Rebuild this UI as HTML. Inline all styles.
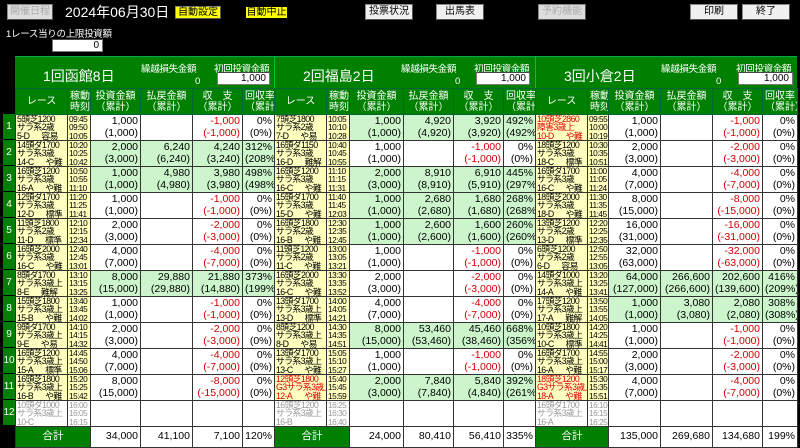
<!DOCTYPE html>
<html><head><meta charset="utf-8"><style>
*{margin:0;padding:0;box-sizing:border-box}
body{width:800px;height:445px;background:#000;position:relative;overflow:hidden;font-family:"Liberation Sans","Noto Sans CJK JP",sans-serif;color:#000}
.btn{position:absolute;top:4px;height:16px;font-size:10px;line-height:14px;text-align:center;background:#f0f0f0;border:1px solid #888;border-right-color:#555;border-bottom-color:#555}
.dis{color:#aaa;background:#ddd}
.yel{background:#ffff00;color:#000}
.tt{position:absolute;color:#fff}
.inp{position:absolute;background:#fff;border:1px solid #777;border-top-color:#444;font-size:10px;text-align:right;padding-right:3px;line-height:12px}
.head{position:absolute;top:56px;height:32px;background:#008000;border-top:1px solid #0a5;color:#fff}
.head .ttl{position:absolute;left:28px;top:9px;font-size:14px}
.head .l1{position:absolute;top:4px;font-size:9.5px;letter-spacing:-0.3px}
table{position:absolute;top:88px;border-collapse:collapse;table-layout:fixed}
td{border:1px solid #333;overflow:hidden;white-space:nowrap;font-size:10.5px;line-height:11.5px;text-align:right;padding:0 2px;background:#fff;height:26px}
tr.h td{background:#008000;color:#fff;text-align:center;font-size:10px;line-height:11px;height:26px;border-color:#063}
td.r{background:#ffffc0;text-align:left;font-size:8.8px;letter-spacing:-0.6px;line-height:8.2px;padding:0 1px;vertical-align:middle}
td.t{background:#ffffc0;text-align:left;font-size:8.3px;letter-spacing:-0.5px;line-height:8.2px;padding:0 0 0 1px}
tr.g td{background:#ccf5cc}
tr.g td.r,tr.g td.t{background:#ffffc0}
tr.x td.r,tr.x td.t{background:#fff;color:#999}
td.m{color:#d00000}
td.rr{color:#e00000}
tr.tot td{height:21px;font-size:10.5px}
td.gh{background:#008000!important;color:#fff;text-align:center;font-size:11px}
.rn{position:absolute;left:3px;width:12px;height:26px;background:#008000;color:#fff;font-size:10px;text-align:center;line-height:26px;border-bottom:1px solid #000}
.sp{display:inline-block;width:12px}
</style></head><body>
<div class="btn dis" style="left:7px;width:46px;top:4px">開催日程</div>
<div class="tt" style="left:65px;top:3px;font-size:14px;line-height:18px">2024年06月30日</div>
<div class="btn yel" style="left:175px;width:46px;top:6px;height:13px;line-height:12px">自動設定</div>
<div class="btn yel" style="left:245px;width:43px;top:6px;height:13px;line-height:11px;border:1px solid #000">自動中止</div>
<div class="btn" style="left:365px;width:48px">投票状況</div>
<div class="btn" style="left:436px;width:48px">出馬表</div>
<div class="btn dis" style="left:538px;width:48px">予約機能</div>
<div class="btn" style="left:690px;width:48px">印刷</div>
<div class="btn" style="left:742px;width:48px">終了</div>
<div class="tt" style="left:6px;top:26px;font-size:9.5px;letter-spacing:-0.3px">1レース当りの上限投資額</div>
<div class="inp" style="left:52px;top:39px;width:51px;height:13px">0</div>

<div class="head" style="left:15px;width:259px"><div class="ttl">1回函館8日</div><div class="l1" style="left:126px">繰越損失金額</div><div class="l1" style="left:180px;top:19px">0</div><div class="l1" style="left:199px">初回投資金額</div></div>
<div class="inp" style="left:217px;top:72px;width:53px;height:13px">1,000</div>
<div class="head" style="left:274px;width:261px;border-left:1px solid #0b4"><div class="ttl">2回福島2日</div><div class="l1" style="left:126px">繰越損失金額</div><div class="l1" style="left:180px;top:19px">0</div><div class="l1" style="left:199px">初回投資金額</div></div>
<div class="inp" style="left:476px;top:72px;width:54px;height:13px">1,000</div>
<div class="head" style="left:535px;width:262px;border-left:1px solid #0b4"><div class="ttl">3回小倉2日</div><div class="l1" style="left:125px">繰越損失金額</div><div class="l1" style="left:180px;top:19px">0</div><div class="l1" style="left:200px">初回投資金額</div></div>
<div class="inp" style="left:738px;top:72px;width:55px;height:13px">1,000</div>

<div class="rn" style="top:114px">1</div><div class="rn" style="top:140px">2</div><div class="rn" style="top:166px">3</div><div class="rn" style="top:192px">4</div><div class="rn" style="top:218px">5</div><div class="rn" style="top:244px">6</div><div class="rn" style="top:270px">7</div><div class="rn" style="top:296px">8</div><div class="rn" style="top:322px">9</div><div class="rn" style="top:348px">10</div><div class="rn" style="top:374px">11</div><div class="rn" style="top:400px">12</div>

<table style="left:15px;width:259px">
<colgroup><col style="width:52px"><col style="width:23px"><col style="width:50px"><col style="width:52px"><col style="width:50px"><col style="width:32px"></colgroup>
<tr class="h"><td>レース</td><td>稼動<br>時刻</td><td>投資金額<br>（累計）</td><td>払戻金額<br>（累計）</td><td>収　支<br>（累計）</td><td>回収率<br>（累計）</td></tr>
<tr><td class="r">5頭芝1200<br>サラ系2歳<br>5-D<span class="sp"></span>容易</td><td class="t">09:45<br>09:50<br>10:05</td><td>1,000<br>(1,000)</td><td></td><td class="m">-1,000<br>(-1,000)</td><td>0%<br>(0%)</td></tr>
<tr class="g"><td class="r">14頭ダ1700<br>サラ系3歳<br>14-C<span class="sp"></span>や難</td><td class="t">10:20<br>10:25<br>10:42</td><td>2,000<br>(3,000)</td><td>6,240<br>(6,240)</td><td>4,240<br>(3,240)</td><td>312%<br>(208%)</td></tr>
<tr class="g"><td class="r">16頭芝1200<br>サラ系3歳<br>16-A<span class="sp"></span>や難</td><td class="t">10:50<br>10:55<br>11:10</td><td>1,000<br>(1,000)</td><td>4,980<br>(4,980)</td><td>3,980<br>(3,980)</td><td>498%<br>(498%)</td></tr>
<tr><td class="r">12頭ダ1700<br>サラ系3歳<br>12-D<span class="sp"></span>標準</td><td class="t">11:20<br>11:25<br>11:41</td><td>1,000<br>(1,000)</td><td></td><td class="m">-1,000<br>(-1,000)</td><td>0%<br>(0%)</td></tr>
<tr><td class="r">11頭芝1800<br>サラ系2歳<br>11-D<span class="sp"></span>標準</td><td class="t">12:10<br>12:15<br>12:34</td><td>2,000<br>(3,000)</td><td></td><td class="m">-2,000<br>(-3,000)</td><td>0%<br>(0%)</td></tr>
<tr><td class="r">16頭芝2000<br>サラ系3歳<br>16-C<span class="sp"></span>や難</td><td class="t">12:40<br>12:45<br>13:01</td><td>4,000<br>(7,000)</td><td></td><td class="m">-4,000<br>(-7,000)</td><td>0%<br>(0%)</td></tr>
<tr class="g"><td class="r">8頭ダ1700<br>サラ系3歳上<br>8-E<span class="sp"></span>難解</td><td class="t">13:10<br>13:15<br>13:25</td><td>8,000<br>(15,000)</td><td>29,880<br>(29,880)</td><td>21,880<br>(14,880)</td><td>373%<br>(199%)</td></tr>
<tr><td class="r">15頭芝1800<br>サラ系3歳上<br>15-B<span class="sp"></span>や難</td><td class="t">13:40<br>13:45<br>14:02</td><td>1,000<br>(1,000)</td><td></td><td class="m">-1,000<br>(-1,000)</td><td>0%<br>(0%)</td></tr>
<tr><td class="r">9頭ダ1700<br>サラ系3歳上<br>9-E<span class="sp"></span>や易</td><td class="t">14:10<br>14:15<br>14:32</td><td>2,000<br>(3,000)</td><td></td><td class="m">-2,000<br>(-3,000)</td><td>0%<br>(0%)</td></tr>
<tr><td class="r">16頭芝1200<br>サラ系3歳上<br>15-A<span class="sp"></span>標準</td><td class="t">14:45<br>14:50<br>15:06</td><td>4,000<br>(7,000)</td><td></td><td class="m">-4,000<br>(-7,000)</td><td>0%<br>(0%)</td></tr>
<tr><td class="r">16頭芝1800<br>サラ系3歳上<br>16-B<span class="sp"></span>や難</td><td class="t">15:20<br>15:25<br>15:42</td><td>8,000<br>(15,000)</td><td></td><td class="m">-8,000<br>(-15,000)</td><td>0%<br>(0%)</td></tr>
<tr class="x"><td class="r">10頭ダ1000<br>サラ系3歳上<br>10-C</td><td class="t">16:00<br>16:05<br>16:15</td><td></td><td></td><td></td><td></td></tr>
<tr class="tot"><td colspan="2" class="gh">合計</td><td>34,000</td><td>41,100</td><td>7,100</td><td>120%</td></tr>
</table>

<table style="left:274px;width:261px">
<colgroup><col style="width:52px"><col style="width:23px"><col style="width:54px"><col style="width:50px"><col style="width:50px"><col style="width:32px"></colgroup>
<tr class="h"><td>レース</td><td>稼動<br>時刻</td><td>投資金額<br>（累計）</td><td>払戻金額<br>（累計）</td><td>収　支<br>（累計）</td><td>回収率<br>（累計）</td></tr>
<tr class="g"><td class="r">7頭芝1800<br>サラ系2歳<br>7-D<span class="sp"></span>や易</td><td class="t">10:05<br>10:10<br>10:28</td><td>1,000<br>(1,000)</td><td>4,920<br>(4,920)</td><td>3,920<br>(3,920)</td><td>492%<br>(492%)</td></tr>
<tr><td class="r">16頭ダ1150<br>サラ系3歳<br>16-D<span class="sp"></span>難解</td><td class="t">10:40<br>10:45<br>10:55</td><td>1,000<br>(1,000)</td><td></td><td class="m">-1,000<br>(-1,000)</td><td>0%<br>(0%)</td></tr>
<tr class="g"><td class="r">16頭芝1200<br>サラ系3歳<br>16-C<span class="sp"></span>や難</td><td class="t">11:10<br>11:15<br>11:31</td><td>2,000<br>(3,000)</td><td>8,910<br>(8,910)</td><td>6,910<br>(5,910)</td><td>445%<br>(297%)</td></tr>
<tr class="g"><td class="r">15頭ダ1700<br>サラ系3歳<br>15-D<span class="sp"></span>や難</td><td class="t">11:40<br>11:45<br>12:03</td><td>1,000<br>(1,000)</td><td>2,680<br>(2,680)</td><td>1,680<br>(1,680)</td><td>268%<br>(268%)</td></tr>
<tr class="g"><td class="r">16頭芝1800<br>サラ系2歳<br>16-B<span class="sp"></span>や難</td><td class="t">12:30<br>12:35<br>12:45</td><td>1,000<br>(1,000)</td><td>2,600<br>(2,600)</td><td>1,600<br>(1,600)</td><td>260%<br>(260%)</td></tr>
<tr><td class="r">11頭芝1200<br>サラ系2歳<br>11-C<span class="sp"></span>や難</td><td class="t">13:00<br>13:05<br>13:21</td><td>1,000<br>(1,000)</td><td></td><td class="m">-1,000<br>(-1,000)</td><td>0%<br>(0%)</td></tr>
<tr><td class="r">16頭芝2000<br>サラ系3歳<br>16-C<span class="sp"></span>や難</td><td class="t">13:30<br>13:35<br>13:52</td><td>2,000<br>(3,000)</td><td></td><td class="m">-2,000<br>(-3,000)</td><td>0%<br>(0%)</td></tr>
<tr><td class="r">13頭ダ1700<br>サラ系3歳上<br>13-D<span class="sp"></span>標準</td><td class="t">14:00<br>14:05<br>14:21</td><td>4,000<br>(7,000)</td><td></td><td class="m">-4,000<br>(-7,000)</td><td>0%<br>(0%)</td></tr>
<tr class="g"><td class="r">8頭芝1200<br>サラ系3歳上<br>8-D<span class="sp"></span>や易</td><td class="t">14:30<br>14:35<br>14:51</td><td>8,000<br>(15,000)</td><td>53,460<br>(53,460)</td><td>45,460<br>(38,460)</td><td>668%<br>(356%)</td></tr>
<tr><td class="r">13頭ダ1700<br>サラ系3歳上<br>13-C<span class="sp"></span>や難</td><td class="t">15:05<br>15:10<br>15:27</td><td>1,000<br>(1,000)</td><td></td><td class="m">-1,000<br>(-1,000)</td><td>0%<br>(0%)</td></tr>
<tr class="g"><td class="r rr">12頭芝1800<br>G3サラ系3歳上<br>12-A<span class="sp"></span>や難</td><td class="t">15:40<br>15:45<br>15:59</td><td>2,000<br>(3,000)</td><td>7,840<br>(7,840)</td><td>5,840<br>(4,840)</td><td>392%<br>(261%)</td></tr>
<tr class="x"><td class="r">16頭芝1200<br>サラ系3歳上<br>16-B</td><td class="t">16:25<br>16:30<br>16:40</td><td></td><td></td><td></td><td></td></tr>
<tr class="tot"><td colspan="2" class="gh">合計</td><td>24,000</td><td>80,410</td><td>56,410</td><td>335%</td></tr>
</table>

<table style="left:535px;width:262px">
<colgroup><col style="width:52px"><col style="width:21px"><col style="width:52px"><col style="width:52px"><col style="width:50px"><col style="width:35px"></colgroup>
<tr class="h"><td>レース</td><td>稼動<br>時刻</td><td>投資金額<br>（累計）</td><td>払戻金額<br>（累計）</td><td>収　支<br>（累計）</td><td>回収率<br>（累計）</td></tr>
<tr><td class="r rr">10頭芝2860<br>障害3歳上<br>10-D<span class="sp"></span>や難</td><td class="t">09:55<br>10:00<br>10:19</td><td>1,000<br>(1,000)</td><td></td><td class="m">-1,000<br>(-1,000)</td><td>0%<br>(0%)</td></tr>
<tr><td class="r">18頭芝1200<br>サラ系3歳<br>18-C<span class="sp"></span>標準</td><td class="t">10:30<br>10:35<br>10:51</td><td>2,000<br>(3,000)</td><td></td><td class="m">-2,000<br>(-3,000)</td><td>0%<br>(0%)</td></tr>
<tr><td class="r">16頭ダ1700<br>サラ系3歳<br>16-C<span class="sp"></span>や難</td><td class="t">11:00<br>11:05<br>11:24</td><td>4,000<br>(7,000)</td><td></td><td class="m">-4,000<br>(-7,000)</td><td>0%<br>(0%)</td></tr>
<tr><td class="r">18頭芝2000<br>サラ系3歳<br>18-D<span class="sp"></span>や難</td><td class="t">11:30<br>11:35<br>11:45</td><td>8,000<br>(15,000)</td><td></td><td class="m">-8,000<br>(-15,000)</td><td>0%<br>(0%)</td></tr>
<tr><td class="r">13頭芝1200<br>サラ系2歳<br>13-D<span class="sp"></span>標準</td><td class="t">12:20<br>12:25<br>12:35</td><td>16,000<br>(31,000)</td><td></td><td class="m">-16,000<br>(-31,000)</td><td>0%<br>(0%)</td></tr>
<tr><td class="r">6頭芝1200<br>サラ系2歳<br>6-D<span class="sp"></span>容易</td><td class="t">12:50<br>12:55<br>13:05</td><td>32,000<br>(63,000)</td><td></td><td class="m">-32,000<br>(-63,000)</td><td>0%<br>(0%)</td></tr>
<tr class="g"><td class="r">14頭ダ1000<br>サラ系3歳上<br>14-A<span class="sp"></span>や難</td><td class="t">13:20<br>13:25<br>13:41</td><td>64,000<br>(127,000)</td><td>266,600<br>(266,600)</td><td>202,600<br>(139,600)</td><td>416%<br>(209%)</td></tr>
<tr class="g"><td class="r">17頭芝1200<br>サラ系3歳上<br>17-A<span class="sp"></span>難解</td><td class="t">13:50<br>13:55<br>14:05</td><td>1,000<br>(1,000)</td><td>3,080<br>(3,080)</td><td>2,080<br>(2,080)</td><td>308%<br>(308%)</td></tr>
<tr><td class="r">10頭芝1800<br>サラ系3歳上<br>10-C<span class="sp"></span>標準</td><td class="t">14:20<br>14:25<br>14:41</td><td>1,000<br>(1,000)</td><td></td><td class="m">-1,000<br>(-1,000)</td><td>0%<br>(0%)</td></tr>
<tr><td class="r">16頭ダ1700<br>サラ系3歳上<br>16-A<span class="sp"></span>や難</td><td class="t">14:55<br>15:00<br>15:17</td><td>2,000<br>(3,000)</td><td></td><td class="m">-2,000<br>(-3,000)</td><td>0%<br>(0%)</td></tr>
<tr><td class="r rr">18頭芝1200<br>G3サラ系3歳上<br>18-A<span class="sp"></span>や難</td><td class="t">15:30<br>15:35<br>15:51</td><td>4,000<br>(7,000)</td><td></td><td class="m">-4,000<br>(-7,000)</td><td>0%<br>(0%)</td></tr>
<tr class="x"><td class="r">16頭ダ1700<br>サラ系3歳上<br>16-A</td><td class="t">16:10<br>16:15<br>16:25</td><td></td><td></td><td></td><td></td></tr>
<tr class="tot"><td colspan="2" class="gh">合計</td><td>135,000</td><td>269,680</td><td>134,680</td><td>199%</td></tr>
</table>
</body></html>
